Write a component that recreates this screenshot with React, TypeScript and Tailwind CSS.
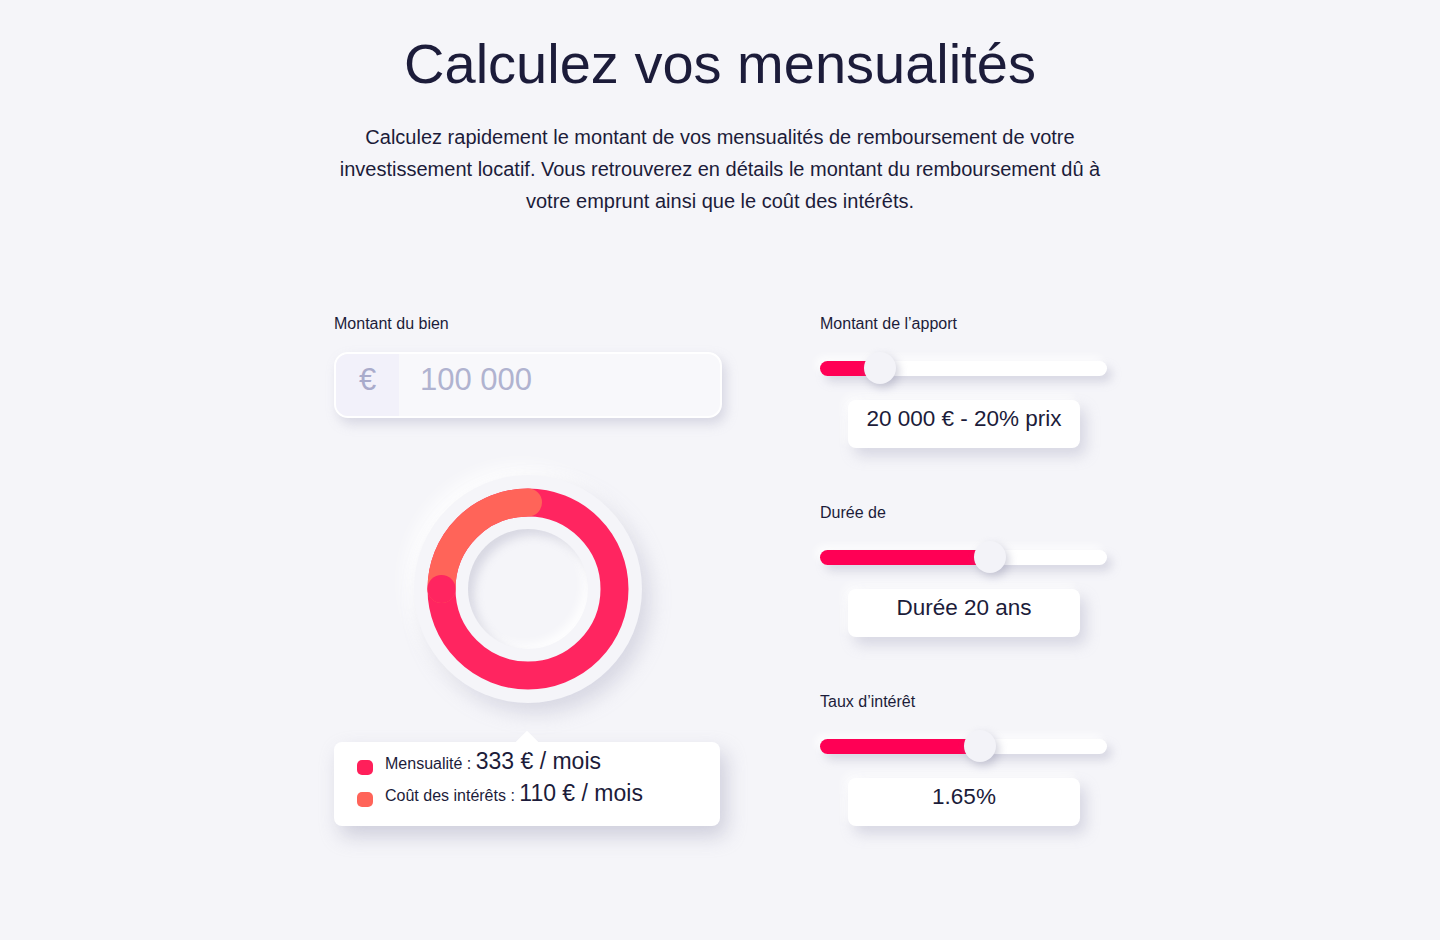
import React from "react";

const FONT = "font-['Liberation_Sans','Helvetica_Neue',Arial,sans-serif]";
const INK = "text-[#1c1c3a]";

function SliderField({
  label,
  fill,
  value,
}: {
  label: string;
  fill: number;
  value: string;
}) {
  return (
    <div className="flex flex-col">
      <p className={`text-[16px] leading-[18px] ${INK}`}>{label}</p>
      <div className="mt-[19px] h-8 w-[287px] flex items-center">
        <div className="w-full h-[15px] rounded-full bg-white shadow-[5px_6px_10px_rgba(160,160,185,0.35),-4px_-4px_8px_rgba(255,255,255,0.9)] flex items-center">
          <div
            className="h-full rounded-l-full bg-[#ff0055] shrink-0"
            style={{ width: fill }}
          />
          <div className="w-8 h-8 -ml-4 shrink-0 rounded-full bg-[#f3f3f8] shadow-[3px_4px_8px_rgba(150,150,175,0.45)]" />
        </div>
      </div>
      <div className="mt-4 ml-[28px] w-[232px] h-[48px] pb-[10px] rounded-lg bg-white shadow-[6px_8px_14px_rgba(160,160,185,0.35),-4px_-4px_10px_rgba(255,255,255,0.8)] flex items-center justify-center">
        <span className={`text-[22.5px] ${INK}`}>{value}</span>
      </div>
    </div>
  );
}

function Donut() {
  const c = 114;
  const r = 86.5;
  return (
    <div className="w-[228px] h-[228px] rounded-full bg-[#f5f5f9] shadow-[8px_10px_20px_rgba(160,160,185,0.35),-8px_-8px_18px_rgba(255,255,255,0.95)] grid place-items-center">
      <svg
        width="228"
        height="228"
        viewBox="0 0 228 228"
        className="col-start-1 row-start-1"
      >
        <circle cx={c} cy={c} r={r} fill="none" stroke="#ff2560" strokeWidth="28" />
        <path
          d={`M ${c - r} ${c} A ${r} ${r} 0 0 1 ${c} ${c - r}`}
          fill="none"
          stroke="#ff6459"
          strokeWidth="28"
          strokeLinecap="round"
        />
        <circle cx={c - r} cy={c} r="14" fill="#ff2560" />
      </svg>
      <div className="col-start-1 row-start-1 w-[120px] h-[120px] rounded-full bg-[#f5f5f9] shadow-[inset_6px_6px_10px_rgba(150,150,175,0.3),inset_-5px_-5px_10px_rgba(255,255,255,0.9)]" />
    </div>
  );
}

export default function App() {
  return (
    <div className={`min-h-[940px] w-full bg-[#f5f5f9] ${FONT} ${INK}`}>
      <div className="flex flex-col items-center pt-[36px]">
        <h1 className="text-[56px] leading-none">Calculez vos mensualités</h1>
        <p className="mt-[29px] text-[20px] leading-[32px] text-center">
          Calculez rapidement le montant de vos mensualités de remboursement de votre
          <br />
          investissement locatif. Vous retrouverez en détails le montant du remboursement dû à
          <br />
          votre emprunt ainsi que le coût des intérêts.
        </p>

        <div className="mt-[98px] flex items-start gap-[98px] pl-[1px]">
          {/* left column */}
          <div className="w-[388px] flex flex-col">
            <p className="text-[16px] leading-[18px]">Montant du bien</p>
            <div className="mt-[19px] h-[66px] rounded-[14px] border-2 border-white bg-[#f8f8fb] shadow-[4px_6px_12px_rgba(160,160,185,0.35)] flex overflow-hidden">
              <div className="w-[63px] bg-[#f2f1fa] flex items-center justify-center text-[31px] text-[#a9abcb] pb-[10px]">
                €
              </div>
              <div className="flex-1 flex items-center pl-[21px] text-[31px] text-[#b0b3d0] pb-[10px]">
                100 000
              </div>
            </div>

            <div className="mt-[57px] flex justify-center">
              <Donut />
            </div>

            <div className="relative mt-[39px] w-[386px] h-[84px] rounded-lg bg-white shadow-[6px_10px_20px_rgba(160,160,185,0.45)] flex flex-col pt-[3px] pl-[23px]">
              <div className="absolute -top-[8px] left-[185px] w-4 h-4 rotate-45 bg-white" />
              <div className="flex items-start h-8">
                <span className="mt-[15px] w-4 h-[15px] rounded-[5px] bg-[#ff1f5a] shrink-0" />
                <p className="ml-3 leading-[32px] whitespace-nowrap">
                  <span className="text-[16px]">Mensualité : </span>
                  <span className="text-[23px]">333 € / mois</span>
                </p>
              </div>
              <div className="flex items-start h-8">
                <span className="mt-[15px] w-4 h-[15px] rounded-[5px] bg-[#ff6459] shrink-0" />
                <p className="ml-3 leading-[32px] whitespace-nowrap">
                  <span className="text-[16px]">Coût des intérêts : </span>
                  <span className="text-[23px]">110 € / mois</span>
                </p>
              </div>
            </div>
          </div>

          {/* right column */}
          <div className="w-[287px] flex flex-col gap-[56px]">
            <SliderField label="Montant de l’apport" fill={60} value="20 000 € - 20% prix" />
            <SliderField label="Durée de" fill={170} value="Durée 20 ans" />
            <SliderField label="Taux d’intérêt" fill={160} value="1.65%" />
          </div>
        </div>
      </div>
    </div>
  );
}
